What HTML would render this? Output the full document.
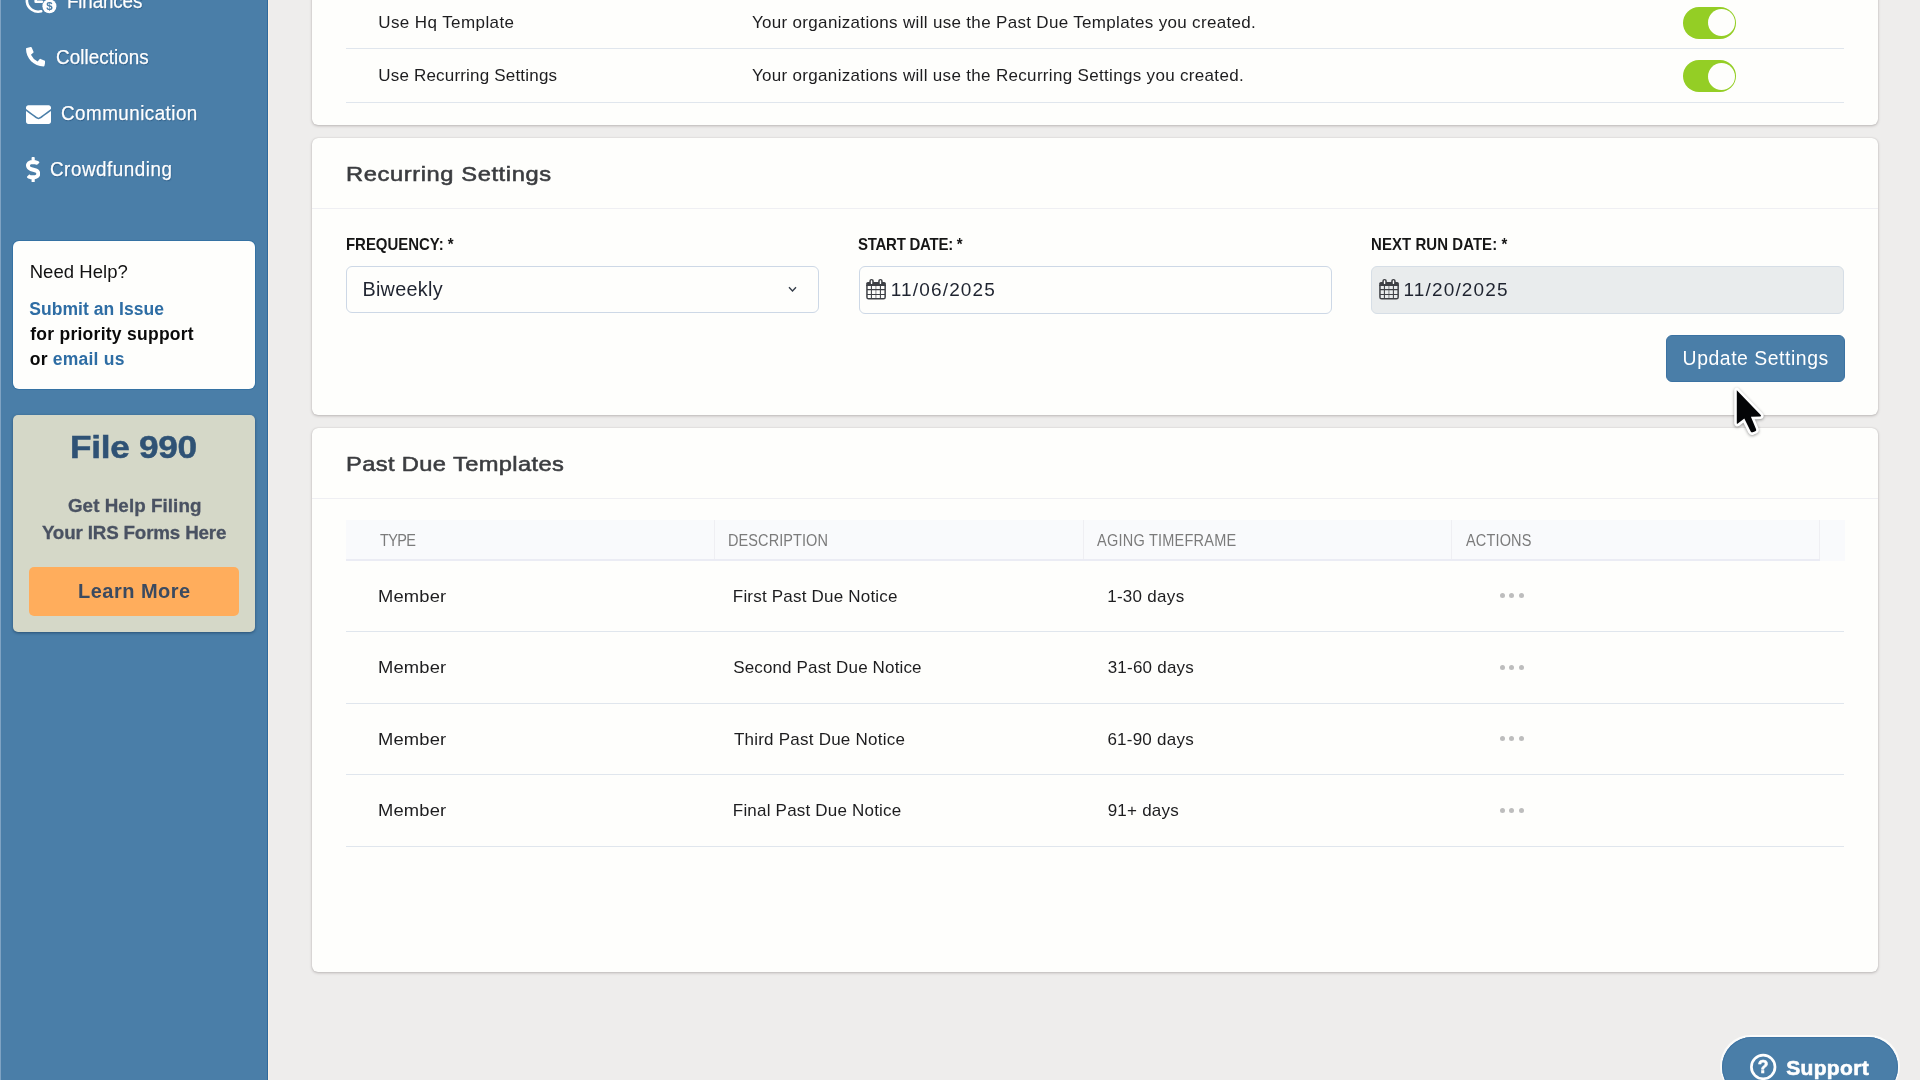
<!DOCTYPE html>
<html lang="en">
<head>
<meta charset="utf-8">
<title>Past Due Settings</title>
<style>
*{box-sizing:border-box;margin:0;padding:0}
html,body{width:1920px;height:1080px;overflow:hidden}
body{background:#eeedec;font-family:"Liberation Sans",sans-serif;color:#1d1d1f;position:relative}
.abs{position:absolute}
.t{position:absolute;white-space:nowrap;line-height:1;font-family:"Liberation Sans",sans-serif}
#sidebar{position:absolute;left:0;top:0;width:268px;height:1080px;background:#4a7ea8}
.card{position:absolute;left:312px;width:1566px;background:#fefefc;border-radius:6px;box-shadow:0 1px 3px rgba(60,50,50,.28),0 0 1px rgba(60,50,50,.25)}
.hr{position:absolute;height:1px;background:#e0e6ed}
.inp{position:absolute;height:47px;width:473px;border:1px solid #cdd8e6;border-radius:6px;background:#fefefc}
.toggle{position:absolute;width:53px;height:32px;border-radius:16px;background:#94ce25}
.toggle i{position:absolute;right:1px;top:2.5px;width:27px;height:27px;border-radius:50%;background:#fefefc}
.dots{position:absolute;width:24px;height:5px}
.dots b{position:absolute;top:0;width:5px;height:5px;border-radius:50%;background:#bdbdbd}
</style>
</head>
<body>

<!-- SIDEBAR -->
<div id="sidebar"></div>
<div class="abs" style="left:0;top:0;width:1px;height:1080px;background:#7fa3c3"></div>
<div class="abs" style="left:267px;top:0;width:1px;height:1080px;background:#2f699c"></div>
<div class="abs" style="left:268px;top:0;width:1.4px;height:1080px;background:#fbf0e4"></div>

<!-- nav icons -->
<svg class="abs" style="left:24px;top:-14px;will-change:transform" width="36" height="30" viewBox="0 0 36 30">
  <path d="M14.3 2.9 A11.4 11.4 0 1 0 17.2 25.3" fill="none" stroke="#fff" stroke-width="2.6" stroke-linecap="round"/>
  <path d="M11.7 8 V15.8 H17.9" fill="none" stroke="#fff" stroke-width="2.6" stroke-linecap="round" stroke-linejoin="round"/>
  <circle cx="25.4" cy="20.25" r="7" fill="#fff"/>
  <text x="25.4" y="24.4" font-size="11.5" font-weight="bold" text-anchor="middle" fill="#4a7ea8" font-family="Liberation Sans, sans-serif">$</text>
</svg>
<svg class="abs" style="left:25.6px;top:47.2px" width="19.4" height="19.4" viewBox="0 0 512 512"><path fill="#fff" d="M497.39 361.8l-112-48a24 24 0 0 0-28 6.9l-49.6 60.6A370.66 370.66 0 0 1 130.6 204.11l60.6-49.6a23.94 23.94 0 0 0 6.9-28l-48-112A24.16 24.16 0 0 0 122.6.61l-104 24A24 24 0 0 0 0 48c0 256.5 207.9 464 464 464a24 24 0 0 0 23.4-18.6l24-104a24.29 24.29 0 0 0-14.01-27.6z"/></svg>
<svg class="abs" style="left:25.6px;top:102px" width="25" height="25" viewBox="0 0 512 512"><path fill="#fff" d="M502.3 190.8c3.9-3.1 9.7-.2 9.7 4.7V400c0 26.5-21.5 48-48 48H48c-26.5 0-48-21.5-48-48V195.6c0-5 5.7-7.8 9.7-4.7 22.4 17.4 52.1 39.5 154.1 113.6 21.1 15.4 56.7 47.8 92.2 47.6 35.7.3 72-32.8 92.3-47.6 102-74.1 131.6-96.3 154-113.7zM256 320c23.2.4 56.6-29.2 73.4-41.4 132.7-96.3 142.8-104.7 173.4-128.7 5.8-4.5 9.2-11.5 9.2-18.9v-19c0-26.5-21.5-48-48-48H48C21.5 64 0 85.5 0 112v19c0 7.4 3.4 14.3 9.2 18.9 30.6 23.9 40.7 32.4 173.4 128.7 16.8 12.2 50.2 41.8 73.4 41.4z"/></svg>
<svg class="abs" style="left:26px;top:157px" width="14.3" height="25.4" viewBox="0 0 288 512"><path fill="#fff" d="M209.2 233.4l-108-31.6C88.7 198.2 80 186.5 80 173.5c0-16.3 13.2-29.5 29.5-29.5h66.3c12.2 0 24.2 3.7 34.2 10.5 6.1 4.1 14.3 3.1 19.5-2l34.8-34c7.1-6.9 6.1-18.4-1.8-24.5C238 74.8 207.4 64.1 176 64V16c0-8.8-7.2-16-16-16h-32c-8.8 0-16 7.2-16 16v48h-2.5C45.8 64-5.4 118.7.5 183.6c4.2 46.1 39.4 83.6 83.8 96.6l102.5 30c12.5 3.7 21.2 15.3 21.2 28.3 0 16.3-13.2 29.5-29.5 29.5h-66.3C100 368 88 364.3 78 357.5c-6.1-4.1-14.3-3.1-19.5 2l-34.8 34c-7.1 6.9-6.1 18.4 1.8 24.5 24.5 19.2 55.1 29.9 86.5 30v48c0 8.8 7.2 16 16 16h32c8.8 0 16-7.2 16-16v-48.2c46.6-.9 90.3-28.6 105.7-72.7 21.5-61.6-14.6-124.8-72.5-141.7z"/></svg>

<!-- help box -->
<div class="abs" style="left:13px;top:241px;width:242px;height:148px;background:#fefefc;border-radius:6px;box-shadow:0 0 0 1px #3572a3"></div>
<!-- file 990 box -->
<div class="abs" style="left:13px;top:415px;width:242px;height:216.5px;background:#d5d8c8;border-radius:5px;box-shadow:0 1px 3px rgba(20,50,80,.6)"></div>
<div class="abs" style="left:29px;top:567px;width:210px;height:48.5px;background:#ffad5c;border-radius:5px"></div>

<!-- CARD 1 -->
<div class="card" style="top:-40px;height:165px"></div>
<div class="hr" style="left:346px;width:1498px;top:48px"></div>
<div class="hr" style="left:346px;width:1498px;top:101.7px"></div>
<div class="toggle" style="left:1683px;top:6.5px"><i></i></div>
<div class="toggle" style="left:1683px;top:60px"><i></i></div>

<!-- CARD 2 -->
<div class="card" style="top:138px;height:277px"></div>
<div class="hr" style="left:312px;width:1566px;top:207.8px;background:#efeff3"></div>
<div class="inp" style="left:346px;top:266px;height:46.5px"></div>
<svg class="abs" style="left:787px;top:285px" width="11" height="9" viewBox="0 0 11 9"><path d="M2 2.3 L5.5 5.9 L9 2.3" fill="none" stroke="#343c48" stroke-width="1.4"/></svg>
<div class="inp" style="left:858.5px;top:266px;height:47.5px"></div>
<div class="inp" style="left:1371px;top:266px;height:47.5px;background:#e9eced;border-color:#d6dee6"></div>
<svg class="abs" style="left:865px;top:278px" width="22" height="23" viewBox="0 0 22 23"><path d="M1.95 7 V19.2 Q1.95 20.85 3.6 20.85 H18.5 Q20.15 20.85 20.15 19.2 V7" fill="none" stroke="#3e4045" stroke-width="1.5"/><path d="M1.2 8 V5.6 Q1.2 3.9 2.9 3.9 H19.2 Q20.9 3.9 20.9 5.6 V8 Z" fill="#3e4045"/><rect x="4.3" y="0.9" width="4.5" height="5.9" rx="2.2" fill="#3e4045"/><rect x="13.2" y="0.9" width="4.5" height="5.9" rx="2.2" fill="#3e4045"/><rect x="5.85" y="2.2" width="1.4" height="3.9" rx=".7" fill="#fff"/><rect x="14.75" y="2.2" width="1.4" height="3.9" rx=".7" fill="#fff"/><path d="M2 11.6 H20 M2 16.5 H20 M6.4 8 V20.5 M15.4 8 V20.5" stroke="#3e4045" stroke-width="1.05" fill="none"/><path d="M10.9 8 V20.5" stroke="#3e4045" stroke-width="1.15" stroke-opacity=".55" fill="none"/></svg>
<svg class="abs" style="left:1377.7px;top:278px" width="22" height="23" viewBox="0 0 22 23"><path d="M1.95 7 V19.2 Q1.95 20.85 3.6 20.85 H18.5 Q20.15 20.85 20.15 19.2 V7" fill="none" stroke="#3e4045" stroke-width="1.5"/><path d="M1.2 8 V5.6 Q1.2 3.9 2.9 3.9 H19.2 Q20.9 3.9 20.9 5.6 V8 Z" fill="#3e4045"/><rect x="4.3" y="0.9" width="4.5" height="5.9" rx="2.2" fill="#3e4045"/><rect x="13.2" y="0.9" width="4.5" height="5.9" rx="2.2" fill="#3e4045"/><rect x="5.85" y="2.2" width="1.4" height="3.9" rx=".7" fill="#fff"/><rect x="14.75" y="2.2" width="1.4" height="3.9" rx=".7" fill="#fff"/><path d="M2 11.6 H20 M2 16.5 H20 M6.4 8 V20.5 M15.4 8 V20.5" stroke="#3e4045" stroke-width="1.05" fill="none"/><path d="M10.9 8 V20.5" stroke="#3e4045" stroke-width="1.15" stroke-opacity=".55" fill="none"/></svg>
<div class="abs" style="left:1666px;top:335px;width:178.5px;height:47px;background:#4a7ea8;border:1px solid #3b72a2;border-radius:6px"></div>

<!-- CARD 3 -->
<div class="card" style="top:428px;height:544.4px"></div>
<div class="hr" style="left:312px;width:1566px;top:497.8px;background:#efeff3"></div>
<div class="abs" style="left:346px;top:520px;width:1498.6px;height:40.7px;background:#f9fafc"></div>
<div class="abs" style="left:346px;top:558.6px;width:1474px;height:2.1px;background:#ebecf4"></div>
<div class="abs" style="left:714px;top:520px;width:1px;height:38.6px;background:#efeff3"></div>
<div class="abs" style="left:1083px;top:520px;width:1px;height:38.6px;background:#efeff3"></div>
<div class="abs" style="left:1451px;top:520px;width:1px;height:38.6px;background:#efeff3"></div>
<div class="abs" style="left:1819px;top:520px;width:1px;height:38.6px;background:#efeff3"></div>
<div class="hr" style="left:346px;width:1498px;top:631.2px"></div>
<div class="hr" style="left:346px;width:1498px;top:702.7px"></div>
<div class="hr" style="left:346px;width:1498px;top:774.2px"></div>
<div class="hr" style="left:346px;width:1498px;top:845.7px"></div>
<div class="dots" style="left:1499.5px;top:593px"><b style="left:0"></b><b style="left:9.5px"></b><b style="left:19px"></b></div>
<div class="dots" style="left:1499.5px;top:664.5px"><b style="left:0"></b><b style="left:9.5px"></b><b style="left:19px"></b></div>
<div class="dots" style="left:1499.5px;top:736px"><b style="left:0"></b><b style="left:9.5px"></b><b style="left:19px"></b></div>
<div class="dots" style="left:1499.5px;top:807.5px"><b style="left:0"></b><b style="left:9.5px"></b><b style="left:19px"></b></div>

<!-- SUPPORT -->
<div class="abs" style="left:1720px;top:1035px;width:180px;height:62px;border-radius:31px;background:#fbfbfa"></div>
<div class="abs" style="left:1721.6px;top:1036.6px;width:176.8px;height:60px;border-radius:30px;background:#4a7ea8;box-shadow:inset 0 0 0 1px #3f74a3"></div>
<svg class="abs" style="left:1749px;top:1052.7px;will-change:transform" width="28" height="28" viewBox="0 0 28 28"><circle cx="14.2" cy="14" r="11.8" fill="none" stroke="#fff" stroke-width="2.7"/><text x="14.2" y="20.3" font-size="17.5" font-weight="bold" text-anchor="middle" fill="#fff" stroke="#fff" stroke-width=".5" font-family="Liberation Sans, sans-serif">?</text></svg>

<!-- TEXT -->
<div id="txt" style="position:absolute;left:0;top:0;width:1920px;height:1080px;will-change:transform">
<span class="t" id="n0" style="left:66.71px;top:-8.98px;font-size:20.3px;color:#fff;letter-spacing:-0.182px;text-shadow:.6px 1px 1px rgba(15,60,105,.6);-webkit-text-stroke:.25px #fff;transform:scaleX(0.93);transform-origin:0 50%;">Finances</span>
<span class="t" id="n1" style="left:56.20px;top:47.02px;font-size:20.3px;color:#fff;letter-spacing:0.051px;text-shadow:.6px 1px 1px rgba(15,60,105,.6);-webkit-text-stroke:.25px #fff;transform:scaleX(0.93);transform-origin:0 50%;">Collections</span>
<span class="t" id="n2" style="left:61.20px;top:103.12px;font-size:20.3px;color:#fff;letter-spacing:0.474px;text-shadow:.6px 1px 1px rgba(15,60,105,.6);-webkit-text-stroke:.25px #fff;transform:scaleX(0.93);transform-origin:0 50%;">Communication</span>
<span class="t" id="n3" style="left:49.99px;top:158.52px;font-size:20.3px;color:#fff;letter-spacing:0.540px;text-shadow:.6px 1px 1px rgba(15,60,105,.6);-webkit-text-stroke:.25px #fff;transform:scaleX(0.93);transform-origin:0 50%;">Crowdfunding</span>
<span class="t" id="h0" style="left:29.64px;top:263.44px;font-size:18.5px;color:#111;letter-spacing:0.062px;">Need Help?</span>
<span class="t" id="h1" style="left:29.22px;top:300.99px;font-size:17.5px;color:#2e6da4;font-weight:bold;letter-spacing:0.045px;">Submit an Issue</span>
<span class="t" id="h2" style="left:30.23px;top:326.29px;font-size:17.5px;color:#0a0a0a;font-weight:bold;letter-spacing:0.264px;">for priority support</span>
<span class="t" id="h3" style="left:29.76px;top:351.19px;font-size:17.5px;color:#0a0a0a;font-weight:bold;letter-spacing:0.228px;">or <span style="color:#2e6da4">email us</span></span>
<span class="t" id="f0" style="left:70.25px;top:430.81px;font-size:32px;color:#2f5275;font-weight:bold;letter-spacing:-0.260px;-webkit-text-stroke:.5px #2f5275;transform:scaleX(1.1);transform-origin:0 50%;">File 990</span>
<span class="t" id="f1" style="left:67.94px;top:496.89px;font-size:18.8px;color:#4a5262;font-weight:bold;letter-spacing:0.068px;-webkit-text-stroke:.3px #4a5262;">Get Help Filing</span>
<span class="t" id="f2" style="left:41.91px;top:523.69px;font-size:18.8px;color:#4a5262;font-weight:bold;letter-spacing:-0.164px;-webkit-text-stroke:.3px #4a5262;">Your IRS Forms Here</span>
<span class="t" id="f3" style="left:78.01px;top:581.47px;font-size:20px;color:#3b4a60;font-weight:bold;letter-spacing:0.491px;">Learn More</span>
<span class="t" id="a0" style="left:378.24px;top:14.41px;font-size:17px;color:#1d1d1f;letter-spacing:0.408px;">Use Hq Template</span>
<span class="t" id="a1" style="left:751.88px;top:14.41px;font-size:17px;color:#1d1d1f;letter-spacing:0.324px;">Your organizations will use the Past Due Templates you created.</span>
<span class="t" id="a2" style="left:378.24px;top:66.91px;font-size:17px;color:#1d1d1f;letter-spacing:0.191px;">Use Recurring Settings</span>
<span class="t" id="a3" style="left:751.88px;top:66.91px;font-size:17px;color:#1d1d1f;letter-spacing:0.322px;">Your organizations will use the Recurring Settings you created.</span>
<span class="t" id="b0" style="left:345.61px;top:164.16px;font-size:20.6px;color:#3b3d40;letter-spacing:0.524px;-webkit-text-stroke:.55px #3b3d40;transform:scaleX(1.15);transform-origin:0 50%;">Recurring Settings</span>
<span class="t" id="b1" style="left:346.27px;top:236.17px;font-size:16.1px;color:#161616;font-weight:bold;letter-spacing:-0.025px;transform:scaleX(0.93);transform-origin:0 50%;">FREQUENCY: *</span>
<span class="t" id="b2" style="left:857.66px;top:236.17px;font-size:16.1px;color:#161616;font-weight:bold;letter-spacing:-0.260px;transform:scaleX(0.93);transform-origin:0 50%;">START DATE: *</span>
<span class="t" id="b3" style="left:1371.27px;top:236.17px;font-size:16.1px;color:#161616;font-weight:bold;letter-spacing:0.072px;transform:scaleX(0.93);transform-origin:0 50%;">NEXT RUN DATE: *</span>
<span class="t" id="b4" style="left:362.41px;top:279.64px;font-size:19.8px;color:#1f2430;letter-spacing:0.315px;">Biweekly</span>
<span class="t" id="b5" style="left:890.72px;top:280.32px;font-size:19px;color:#1f2430;letter-spacing:1.167px;">11/06/2025</span>
<span class="t" id="b6" style="left:1403.56px;top:280.32px;font-size:19px;color:#1f2430;letter-spacing:1.145px;">11/20/2025</span>
<span class="t" id="b7" style="left:1682.62px;top:348.83px;font-size:19.4px;color:#fff;letter-spacing:0.542px;">Update Settings</span>
<span class="t" id="c0" style="left:345.90px;top:454.06px;font-size:20.6px;color:#3b3d40;letter-spacing:0.325px;-webkit-text-stroke:.55px #3b3d40;transform:scaleX(1.15);transform-origin:0 50%;">Past Due Templates</span>
<span class="t" id="c1" style="left:379.63px;top:532.76px;font-size:16.7px;color:#7b7b7b;letter-spacing:-0.771px;transform:scaleX(0.87);transform-origin:0 50%;">TYPE</span>
<span class="t" id="c2" style="left:728.25px;top:532.76px;font-size:16.7px;color:#7b7b7b;letter-spacing:0.087px;transform:scaleX(0.87);transform-origin:0 50%;">DESCRIPTION</span>
<span class="t" id="c3" style="left:1096.87px;top:532.76px;font-size:16.7px;color:#7b7b7b;letter-spacing:0.259px;transform:scaleX(0.87);transform-origin:0 50%;">AGING TIMEFRAME</span>
<span class="t" id="c4" style="left:1465.54px;top:532.76px;font-size:16.7px;color:#7b7b7b;letter-spacing:0.171px;transform:scaleX(0.87);transform-origin:0 50%;">ACTIONS</span>
<span class="t" id="r0a" style="left:377.94px;top:588.31px;font-size:17px;color:#1d1d1f;letter-spacing:0.160px;transform:scaleX(1.08);transform-origin:0 50%;">Member</span>
<span class="t" id="r0b" style="left:732.81px;top:588.31px;font-size:17px;color:#1d1d1f;letter-spacing:0.203px;">First Past Due Notice</span>
<span class="t" id="r0c" style="left:1107.15px;top:588.31px;font-size:17px;color:#1d1d1f;letter-spacing:0.291px;">1-30 days</span>
<span class="t" id="r1a" style="left:377.94px;top:658.71px;font-size:17px;color:#1d1d1f;letter-spacing:0.160px;transform:scaleX(1.08);transform-origin:0 50%;">Member</span>
<span class="t" id="r1b" style="left:733.16px;top:658.71px;font-size:17px;color:#1d1d1f;letter-spacing:0.152px;">Second Past Due Notice</span>
<span class="t" id="r1c" style="left:1107.63px;top:658.71px;font-size:17px;color:#1d1d1f;letter-spacing:0.230px;">31-60 days</span>
<span class="t" id="r2a" style="left:377.94px;top:731.31px;font-size:17px;color:#1d1d1f;letter-spacing:0.160px;transform:scaleX(1.08);transform-origin:0 50%;">Member</span>
<span class="t" id="r2b" style="left:733.88px;top:731.31px;font-size:17px;color:#1d1d1f;letter-spacing:0.235px;">Third Past Due Notice</span>
<span class="t" id="r2c" style="left:1107.42px;top:731.31px;font-size:17px;color:#1d1d1f;letter-spacing:0.235px;">61-90 days</span>
<span class="t" id="r3a" style="left:377.94px;top:801.91px;font-size:17px;color:#1d1d1f;letter-spacing:0.160px;transform:scaleX(1.08);transform-origin:0 50%;">Member</span>
<span class="t" id="r3b" style="left:732.81px;top:801.91px;font-size:17px;color:#1d1d1f;letter-spacing:0.203px;">Final Past Due Notice</span>
<span class="t" id="r3c" style="left:1107.63px;top:801.91px;font-size:17px;color:#1d1d1f;letter-spacing:0.244px;">91+ days</span>
<span class="t" id="s0" style="left:1786.21px;top:1056.82px;font-size:21px;color:#fff;font-weight:bold;letter-spacing:0.335px;-webkit-text-stroke:.6px #fff;">Support</span>
</div>

<!-- CURSOR -->
<svg class="abs" style="left:1728px;top:380px;filter:drop-shadow(0.5px 1.5px 1.6px rgba(0,0,0,.38))" width="44" height="64" viewBox="0 0 44 64">
  <path d="M8.8 10.3 L8.8 43.2 Q8.9 44.2 9.8 43.6 L16.3 38.6 L22.7 51.5 Q23.4 52.7 24.8 52.2 L27.3 51.2 Q28.6 50.5 28.1 49.2 L22.9 36.8 L32.2 36.4 Q33.6 36.2 32.7 35.1 Z" fill="#040507" stroke="#fff" stroke-width="5.2" stroke-linejoin="round" paint-order="stroke"/>
</svg>

</body>
</html>
